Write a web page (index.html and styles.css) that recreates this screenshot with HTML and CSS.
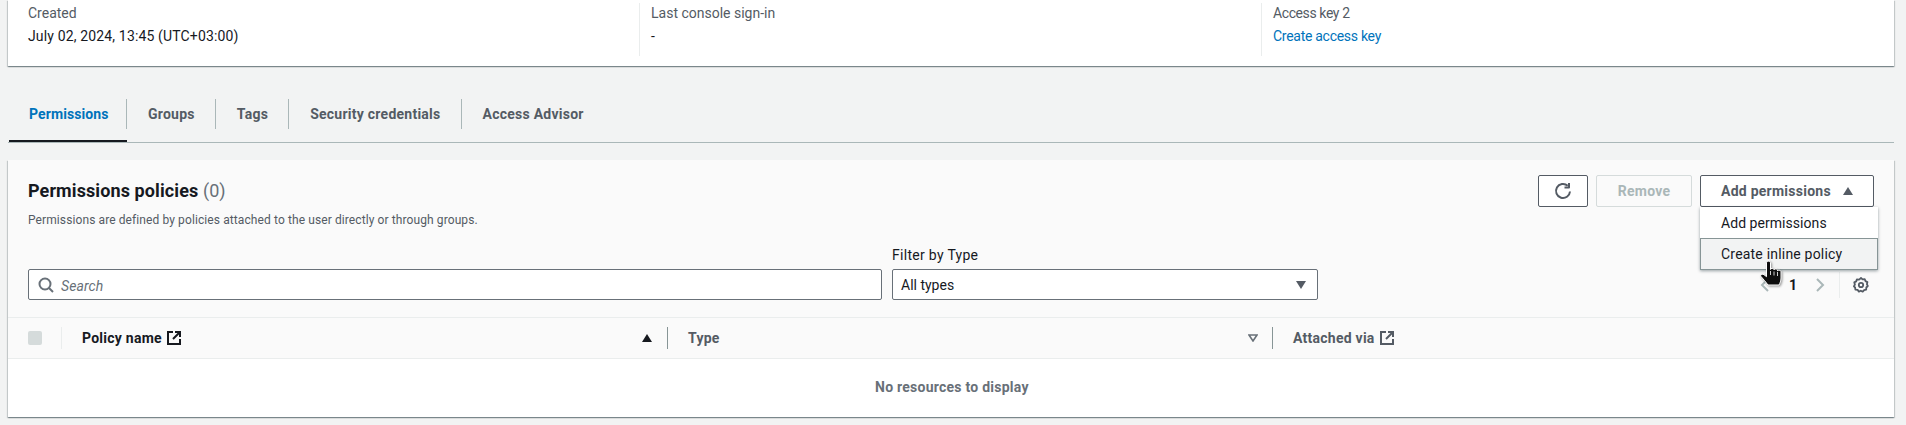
FILE: index.html
```html
<!DOCTYPE html>
<html lang="en">
<head>
<meta charset="utf-8">
<title>Permissions</title>
<link rel="stylesheet" href="styles.css">
</head>
<body>
<section class="summary">
  <div class="summary-col first">
    <div class="key">Created</div>
    <div class="val">July 02, 2024, 13:45 (UTC+03:00)</div>
  </div>
  <div class="summary-col second">
    <div class="key">Last console sign-in</div>
    <div class="val">-</div>
  </div>
  <div class="summary-col third">
    <div class="key tight">Access key 2</div>
    <a class="val link" href="#">Create access key</a>
  </div>
</section>

<nav class="tabs">
  <a class="tab active" href="#"><span>Permissions</span></a>
  <a class="tab" href="#"><span>Groups</span></a>
  <a class="tab" href="#"><span>Tags</span></a>
  <a class="tab" href="#"><span>Security credentials</span></a>
  <a class="tab last" href="#"><span>Access Advisor</span></a>
</nav>

<section class="panel">
  <header class="panel-head">
    <div class="title-row">
      <h2 class="title">Permissions policies <span class="count">(0)</span></h2>
      <div class="actions">
        <button class="btn icon-btn" aria-label="Refresh">
          <svg width="18" height="18" viewBox="0 0 18 18" fill="none" stroke="#545b64" stroke-width="2"><path d="M16 9.500a7 7 0 1 1-2.300-5.700"/><path d="M15 1v4.500h-4.500" stroke-linejoin="round"/></svg>
        </button>
        <button class="btn disabled">Remove</button>
        <div class="menu-wrap">
          <button class="btn add">Add permissions <svg class="caret" width="12" height="8" viewBox="0 0 12 8"><path d="M6 0l5 8H1z" fill="#545b64"/></svg></button>
          <ul class="menu">
            <li class="menu-item">Add permissions</li>
            <li class="menu-item hover">Create inline policy</li>
          </ul>
        </div>
      </div>
    </div>
    <p class="desc">Permissions are defined by policies attached to the user directly or through groups.</p>
    <div class="filters">
      <div class="search">
        <svg width="16" height="16" viewBox="0 0 16 16" fill="none" stroke="#687078" stroke-width="2"><circle cx="7" cy="7" r="5.500"/><path d="M11 11l4 4"/></svg>
        <span class="placeholder">Search</span>
      </div>
      <div class="filter-type">
        <label class="filter-label">Filter by Type</label>
        <div class="select">
          <span>All types</span>
          <svg width="12" height="8" viewBox="0 0 12 8"><path d="M1 0h10L6 8z" fill="#545b64"/></svg>
        </div>
      </div>
      <div class="pager">
        <svg width="10" height="16" viewBox="0 0 10 16" fill="none" stroke="#aab7b8" stroke-width="2"><path d="M8 2L2 8l6 6"/></svg>
        <span class="page">1</span>
        <svg width="10" height="16" viewBox="0 0 10 16" fill="none" stroke="#aab7b8" stroke-width="2"><path d="M2 2l6 6-6 6"/></svg>
        <span class="pager-sep"></span>
        <svg class="gear" width="16" height="16" viewBox="0 0 16 16" fill="none" stroke="#545b64"><circle cx="8" cy="8" r="2.200" stroke-width="1.800"/><path d="M8 1l1.600 1.400 2.100-.3.800 2 1.900 1-.5 2.100.9 1.800-1.500 1.500-.1 2.200-2.100.4-1.400 1.600-1.900-1-1.900.9-1.300-1.700-2.200-.3-.3-2.100L.9 9.400l1-1.900-.6-2.100 1.900-1 .7-2 2.200.2z" stroke-width="1.800" stroke-linejoin="round"/></svg>
      </div>
    </div>
  </header>

  <div class="thead">
    <div class="th check"><span class="checkbox"></span></div>
    <div class="th name">
      <span class="th-label">Policy name</span>
      <svg class="ext" width="14" height="14" viewBox="0 0 14 14" fill="none" stroke="#16191f" stroke-width="2"><path d="M6 1H1v12h12V8"/><path d="M8 1h5v5M13 1L6 8"/></svg>
      <svg class="sort" width="12" height="8" viewBox="0 0 12 8"><path d="M6 0l5 8H1z" fill="#16191f"/></svg>
    </div>
    <div class="th type">
      <span class="th-label muted">Type</span>
      <svg class="sort" width="10" height="8" viewBox="0 0 10 8" fill="none" stroke="#687078" stroke-width="1.600"><path d="M1 1h8L5 7z"/></svg>
    </div>
    <div class="th via">
      <span class="th-label muted">Attached via</span>
      <svg class="ext" width="14" height="14" viewBox="0 0 14 14" fill="none" stroke="#545b64" stroke-width="2"><path d="M6 1H1v12h12V8"/><path d="M8 1h5v5M13 1L6 8"/></svg>
    </div>
  </div>
  <div class="empty">No resources to display</div>
</section>

<svg class="cursor" width="26" height="28" viewBox="0 0 26 28">
  <path d="M7.500 3c0-2.500 4-2.500 4 0v6.500c0-1.500 3.500-1.500 3.500 0v.5c0-1.500 3.500-1.500 3.500.3v.7c0-1.300 3.500-1 3.500.8V18c0 3-1 5-2 7H9c-2-3-5-6-7-8.500-1-1.500 1-3.300 3-1.800l2.500 2z" fill="#0d0d0d" stroke="#fff" stroke-width="1"/>
  <path d="M11.500 11v4M15 11.500v4M18.500 12v4" stroke="#fff" stroke-width=".8"/>
</svg>
</body>
</html>
```
FILE: styles.css
```css
* { box-sizing: border-box; }
html, body { margin: 0; }
body {
  position: relative;
  height: 425px;
  overflow: hidden;
  padding: 0 12px 0 8px;
  background: #f2f3f3;
  color: #16191f;
  font-family: Roboto, sans-serif;
  font-size: 14px;
  line-height: 20px;
}
.summary {
  display: flex;
  height: 66px;
  background: #fff;
  box-shadow: 0 1px 1px 0 rgba(0, 28, 36, .3), 1px 1px 1px 0 rgba(0, 28, 36, .15), -1px 1px 1px 0 rgba(0, 28, 36, .15);
  padding-top: 3px;
}
.summary-col { height: 53px; padding-left: 11px; }
.summary-col.first { width: 631px; padding-left: 20px; }
.summary-col.second { width: 622px; border-left: 1px solid #eaeded; }
.summary-col.third { flex: 1; border-left: 1px solid #eaeded; }
.key { color: #545b64; height: 23px; }
.key.tight { letter-spacing: -.4px; }
.val { display: block; letter-spacing: .15px; }
.link { color: #0073bb; text-decoration: none; letter-spacing: -.28px; }

.tabs {
  display: flex;
  margin-top: 33px;
  height: 44px;
  border-bottom: 1px solid #aab7b8;
}
.tab {
  height: 43px;
  color: #545b64;
  font-weight: 700;
  letter-spacing: .25px;
  text-decoration: none;
  padding-bottom: 13px;
  display: flex;
}
.tab span {
  display: flex;
  align-items: center;
  height: 30px;
  padding: 0 20px 0 21px;
  border-right: 1px solid #aab7b8;
}
.tab.last span { border-right: 0; }
.tab.active { color: #0073bb; border-bottom: 2px solid #16191f; width: 118px; margin-left: 1px; letter-spacing: .1px; }
.tab.active span { width: 118px; padding: 0 20px; }

.panel {
  margin-top: 17px;
  height: 257px;
  background: #fff;
  box-shadow: 0 1px 1px 0 rgba(0, 28, 36, .3), 1px 1px 1px 0 rgba(0, 28, 36, .15), -1px 1px 1px 0 rgba(0, 28, 36, .15);
}
.panel-head {
  height: 158px;
  background: #fafafa;
  padding: 15px 20px 0 20px;
  border-bottom: 1px solid #eaeded;
}
.title-row { display: flex; justify-content: space-between; height: 32px; }
.title { margin: 0; padding-top: 1px; font-size: 18px; line-height: 30px; font-weight: 700; letter-spacing: .1px; }
.count { font-weight: 400; color: #687078; }
.actions { display: flex; gap: 8px; }
.btn {
  height: 32px;
  padding: 0 20px;
  border: 1px solid #545b64;
  border-radius: 2px;
  background: #fff;
  color: #545b64;
  font: 700 14px/20px Roboto, sans-serif;
  letter-spacing: .25px;
}
.icon-btn { width: 50px; padding: 0; display: flex; align-items: center; justify-content: center; }
.disabled { border-color: #d5dbdb; background: #fafafa; color: #aab7b8; width: 96px; padding: 0; }
.add { width: 174px; display: flex; align-items: center; justify-content: space-between; padding: 0 19px 0 20px; }
.menu-wrap { position: relative; width: 174px; }
.menu {
  position: absolute;
  z-index: 2;
  left: 0;
  top: 32px;
  width: 178px;
  margin: 0;
  padding: 0;
  list-style: none;
  background: #fff;
  box-shadow: 0 1px 3px rgba(0, 28, 36, .4);
}
.menu-item { height: 31px; padding: 6px 21px; color: #16191f; letter-spacing: .05px; }
.menu-item.hover { height: 32px; padding: 5px 20px; background: #f2f3f3; border: 1px solid #879596; letter-spacing: .2px; }
.desc { margin: 5px 0 0; font-size: 12px; line-height: 16px; color: #545b64; letter-spacing: .1px; }
.filters { display: flex; align-items: flex-end; margin-top: 17px; }
.search {
  width: 854px;
  height: 31px;
  display: flex;
  align-items: center;
  gap: 7px;
  padding-left: 9px;
  background: #fff;
  border: 1px solid #687078;
  border-radius: 2px;
}
.placeholder { color: #687078; font-style: italic; padding-top: 2px; letter-spacing: .1px; }
.filter-type { margin-left: 10px; width: 426px; }
.filter-label { display: block; height: 24px; line-height: 20px; letter-spacing: .3px; }
.select {
  height: 31px;
  display: flex;
  align-items: center;
  justify-content: space-between;
  padding: 0 10px 0 8px;
  background: #fff;
  border: 1px solid #687078;
  border-radius: 2px;
}
.pager { display: flex; align-items: center; height: 31px; margin-left: auto; margin-right: 5px; }
.page { font-weight: 700; margin: 0 18px 0 19px; }
.pager-sep { width: 1px; height: 26px; background: #eaeded; margin: 0 13px 0 14px; }

.thead {
  display: grid;
  grid-template-columns: 53px 606px 605px 1fr;
  height: 41px;
  background: #fafafa;
  border-bottom: 1px solid #eaeded;
  align-items: center;
  font-weight: 700;
  letter-spacing: .25px;
}
.th { display: flex; align-items: center; height: 22px; }
.th + .th { border-left: 1px solid #879596; padding-left: 20px; }
.th.name { border-left-color: #eaeded; }
.check { padding-left: 20px; }
.checkbox { width: 14px; height: 14px; border-radius: 2px; background: #d5dbdb; }
.muted { color: #545b64; }
.th .ext { margin-left: 5px; }
.th .sort { margin-left: auto; margin-right: 14px; }
.empty {
  height: 58px;
  display: flex;
  align-items: center;
  padding-left: 867px;
  padding-bottom: 2px;
  color: #687078;
  font-weight: 700;
  letter-spacing: .25px;
}
.cursor {
  position: absolute;
  left: 1759px;
  top: 260px;
  z-index: 3;
  filter: drop-shadow(1px 1px 1px rgba(0, 0, 0, .4));
}
```
